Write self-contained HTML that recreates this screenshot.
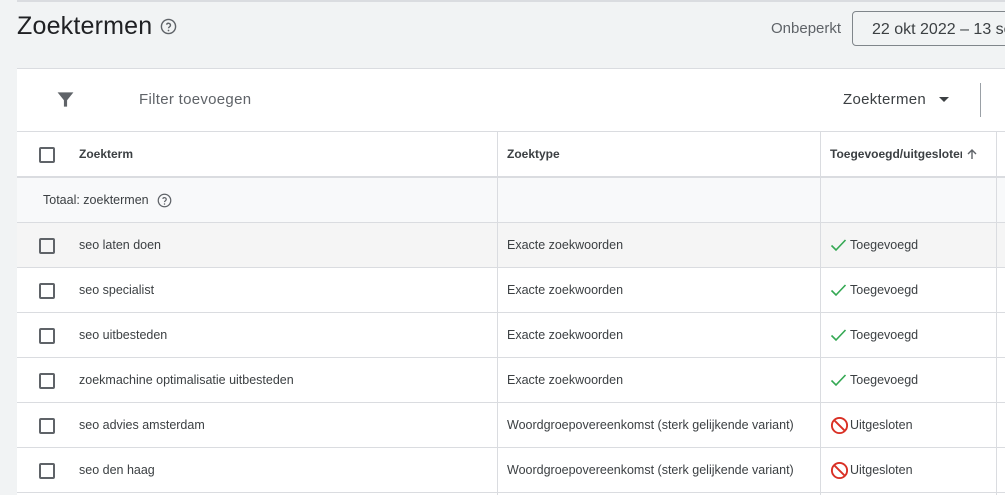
<!DOCTYPE html>
<html><head><meta charset="utf-8"><style>
*{margin:0;padding:0;box-sizing:border-box}
body{width:1005px;height:495px;overflow:hidden;background:#f1f3f4;font-family:"Liberation Sans",Arial,sans-serif;color:#202124;position:relative}
.abs{position:absolute}
.topline{left:17px;top:0;width:988px;height:2px;background:#dadce0}
h1{position:absolute;left:17px;top:12px;font-size:25px;font-weight:400;color:#202124;letter-spacing:0.2px}
.card{left:17px;top:68px;width:988px;height:427px;background:#fff;border-top:1px solid #dadce0}
.row{position:absolute;left:17px;width:988px;height:45px;border-bottom:1px solid #dadce0;font-size:12.5px;color:#3c4043}
.row div{position:absolute;top:0;height:100%;display:flex;align-items:center;white-space:nowrap}
.c1{left:62px}.c2{left:490px}.c3{left:813px}
.cb{position:absolute;left:22px;top:15px;width:16px;height:16px;border:2px solid #5f6368;border-radius:2px}
.vl{position:absolute;top:131px;width:1px;height:364px;background:#dadce0}
.ok{margin-right:3px}
</style></head><body>
<div class="abs topline"></div>
<h1>Zoektermen</h1>
<svg class="abs" style="left:160px;top:18px" width="17" height="17" viewBox="0 0 24 24"><circle cx="12" cy="12" r="10" fill="none" stroke="#5f6368" stroke-width="2"/><path d="M9.2 9.3a2.9 2.9 0 0 1 5.6 1c0 2-2.8 2.4-2.8 4.2" fill="none" stroke="#5f6368" stroke-width="2"/><circle cx="12" cy="17.6" r="1.2" fill="#5f6368"/></svg>
<div class="abs" style="left:771px;top:20px;font-size:15px;color:#5f6368">Onbeperkt</div>
<div class="abs" style="left:852px;top:11px;width:170px;height:35px;border:1px solid #80868b;border-radius:4px;background:#f1f3f4;font-size:16px;padding:9px 0 0 19px;color:#3c4043;white-space:nowrap;overflow:hidden">22 okt 2022 – 13 sep</div>
<div class="abs card"></div>
<svg class="abs" style="left:56px;top:90px" width="19" height="19" viewBox="0 0 24 24"><path d="M2 3h20l-8 10v8h-4v-8z" fill="#5f6368"/></svg>
<div class="abs" style="left:139px;top:91px;font-size:15px;color:#5f6368;letter-spacing:0.3px">Filter toevoegen</div>
<div class="abs" style="left:843px;top:91px;font-size:15px;color:#3c4043;letter-spacing:0.3px">Zoektermen</div>
<div class="abs" style="left:939px;top:97px;width:0;height:0;border-left:5px solid transparent;border-right:5px solid transparent;border-top:5px solid #3c4043"></div>
<div class="abs" style="left:980px;top:83px;width:1px;height:34px;background:#9aa0a6"></div>
<div class="abs" style="left:17px;top:131px;width:988px;height:1px;background:#dadce0"></div>

<div class="row" style="top:132px;height:46px;border-bottom:2px solid #dadce0;font-weight:bold;font-size:12px;color:#3c4043"><span class="cb"></span><div class="c1">Zoekterm</div><div class="c2">Zoektype</div><div class="c3"><span style="display:inline-block;width:132px;overflow:hidden">Toegevoegd/uitgesloten</span><svg style="margin-left:4px" width="12" height="12" viewBox="0 0 12 12"><path d="M6 11V2M2 6l4-4 4 4" fill="none" stroke="#5f6368" stroke-width="1.4"/></svg></div></div>
<div class="row" style="top:178px;background:#f8f9fa"><div style="left:26px">Totaal: zoektermen<svg style="margin-left:8px" width="15" height="15" viewBox="0 0 24 24"><circle cx="12" cy="12" r="10" fill="none" stroke="#5f6368" stroke-width="2"/><path d="M9.2 9.3a2.9 2.9 0 0 1 5.6 1c0 2-2.8 2.4-2.8 4.2" fill="none" stroke="#5f6368" stroke-width="2"/><circle cx="12" cy="17.6" r="1.2" fill="#5f6368"/></svg></div></div>
<div class="row" style="top:223px;background:#f5f5f5"><span class="cb"></span><div class="c1">seo laten doen</div><div class="c2">Exacte zoekwoorden</div><div class="c3"><svg class="ok" width="17" height="14" viewBox="0 0 17 14"><path d="M1.5 7.5l4.5 4.5 9.5-10" fill="none" stroke="#34a853" stroke-width="1.6"/></svg>Toegevoegd</div></div>
<div class="row" style="top:268px"><span class="cb"></span><div class="c1">seo specialist</div><div class="c2">Exacte zoekwoorden</div><div class="c3"><svg class="ok" width="17" height="14" viewBox="0 0 17 14"><path d="M1.5 7.5l4.5 4.5 9.5-10" fill="none" stroke="#34a853" stroke-width="1.6"/></svg>Toegevoegd</div></div>
<div class="row" style="top:313px"><span class="cb"></span><div class="c1">seo uitbesteden</div><div class="c2">Exacte zoekwoorden</div><div class="c3"><svg class="ok" width="17" height="14" viewBox="0 0 17 14"><path d="M1.5 7.5l4.5 4.5 9.5-10" fill="none" stroke="#34a853" stroke-width="1.6"/></svg>Toegevoegd</div></div>
<div class="row" style="top:358px"><span class="cb"></span><div class="c1">zoekmachine optimalisatie uitbesteden</div><div class="c2">Exacte zoekwoorden</div><div class="c3"><svg class="ok" width="17" height="14" viewBox="0 0 17 14"><path d="M1.5 7.5l4.5 4.5 9.5-10" fill="none" stroke="#34a853" stroke-width="1.6"/></svg>Toegevoegd</div></div>
<div class="row" style="top:403px"><span class="cb"></span><div class="c1">seo advies amsterdam</div><div class="c2">Woordgroepovereenkomst (sterk gelijkende variant)</div><div class="c3"><svg width="19" height="19" viewBox="0 0 20 20" style="margin-right:1px"><circle cx="10" cy="10" r="8" fill="none" stroke="#d93025" stroke-width="2"/><path d="M4.5 4.5l11 11" stroke="#d93025" stroke-width="2"/></svg>Uitgesloten</div></div>
<div class="row" style="top:448px"><span class="cb"></span><div class="c1">seo den haag</div><div class="c2">Woordgroepovereenkomst (sterk gelijkende variant)</div><div class="c3"><svg width="19" height="19" viewBox="0 0 20 20" style="margin-right:1px"><circle cx="10" cy="10" r="8" fill="none" stroke="#d93025" stroke-width="2"/><path d="M4.5 4.5l11 11" stroke="#d93025" stroke-width="2"/></svg>Uitgesloten</div></div>
<div class="vl" style="left:497px"></div><div class="vl" style="left:820px"></div><div class="vl" style="left:996px"></div>
</body></html>
